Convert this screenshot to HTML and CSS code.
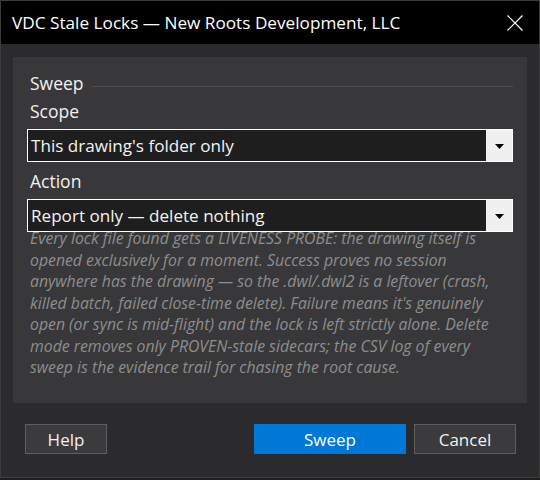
FILE: index.html
```html
<!DOCTYPE html>
<html>
<head>
<meta charset="utf-8">
<link rel="stylesheet" href="styles.css">
</head>
<body>
<div class="window">
  <div class="titlebar">
    <span class="title">VDC Stale Locks — New Roots Development, LLC</span>
    <svg class="close" width="16" height="16" viewBox="0 0 16 16"><path d="M0.5 0.5 L15.5 15.5 M15.5 0.5 L0.5 15.5" stroke="#ffffff" stroke-width="1.2" fill="none"/></svg>
  </div>
  <div class="body">
    <div class="panel">
      <div class="heading"><span>Sweep</span><div class="rule"></div></div>
      <div class="label">Scope</div>
      <div class="combo"><span class="value">This drawing's folder only</span><span class="drop"><svg width="9" height="5" viewBox="0 0 9 5"><path d="M0 0 H9 L4.5 5 Z" fill="#000"/></svg></span></div>
      <div class="label">Action</div>
      <div class="combo"><span class="value">Report only — delete nothing</span><span class="drop"><svg width="9" height="5" viewBox="0 0 9 5"><path d="M0 0 H9 L4.5 5 Z" fill="#000"/></svg></span></div>
      <p class="desc">Every lock file found gets a LIVENESS PROBE: the drawing itself is<br>opened exclusively for a moment. Success proves no session<br>anywhere has the drawing — so the .dwl/.dwl2 is a leftover (crash,<br>killed batch, failed close-time delete). Failure means it's genuinely<br>open (or sync is mid-flight) and the lock is left strictly alone. Delete<br>mode removes only PROVEN-stale sidecars; the CSV log of every<br>sweep is the evidence trail for chasing the root cause.</p>
    </div>
    <div class="footer">
      <button class="btn">Help</button>
      <div class="spacer"></div>
      <button class="btn primary">Sweep</button>
      <button class="btn cancel">Cancel</button>
    </div>
  </div>
</div>
</body>
</html>
```
FILE: styles.css
```css
html, body {
  margin: 0;
  padding: 0;
  background: #1f1f1f;
  width: 540px;
  height: 480px;
  overflow: hidden;
}
.window {
  box-sizing: border-box;
  width: 540px;
  height: 478px;
  border: 1px solid #3c3c3c;
  display: flex;
  flex-direction: column;
  font-family: "Open Sans", sans-serif;
  color: #f0f0f0;
}
.titlebar {
  height: 43px;
  background: #000;
  display: flex;
  align-items: center;
  padding-left: 11px;
  padding-right: 16px;
}
.title {
  flex: 1;
  font-size: 17.2px;
  color: #fff;
}
.close {
  display: block;
  margin-top: 1px;
}
.body {
  flex: 1;
  background: #2b2b2d;
  display: flex;
  flex-direction: column;
}
.panel {
  margin: 13px 12px 0 12px;
  height: 346px;
  box-sizing: border-box;
  background: #38383a;
  padding: 15px 14px 0 14px;
}
.heading {
  display: flex;
  align-items: center;
  font-size: 17.5px;
  line-height: 22px;
  padding-left: 3px;
}
.heading .rule {
  flex: 1;
  height: 1px;
  background: #4d4d4f;
  margin-left: 8px;
  margin-top: 6px;
}
.label {
  font-size: 17.5px;
  line-height: 22px;
  padding-left: 3px;
  margin: 8px 0 7px 0;
}
.heading + .label { margin-top: 6px; }
.combo {
  height: 33px;
  box-sizing: border-box;
  border: 1px solid #ffffff;
  background: #1e1e1e;
  display: flex;
  align-items: center;
}
.combo .value {
  flex: 1;
  padding-left: 3px;
  font-size: 17.1px;
  color: #f2f2f2;
}
.combo .drop {
  width: 26px;
  align-self: stretch;
  background: #f0f0f0;
  display: flex;
  align-items: center;
  justify-content: center;
}
.combo .drop svg { display: block; margin-top: 1px; }
.desc {
  margin: -4px 0 0 0;
  padding-left: 3px;
  font-style: italic;
  font-size: 15.8px;
  line-height: 21.5px;
  color: #8e8e8e;
  white-space: nowrap;
}
.footer {
  display: flex;
  padding: 21px 23px 0 24px;
  gap: 8px;
}
.spacer { flex: 1; }
.btn {
  height: 30px;
  box-sizing: border-box;
  font-family: "Open Sans", sans-serif;
  font-size: 17px;
  color: #f0f0f0;
  background: #3b3b3e;
  border: 1px solid #5e5e60;
  padding: 0;
  width: 82px;
}
.btn.primary {
  width: 152px;
  background: #0078d7;
  border-color: #0078d7;
  color: #fff;
}
.btn.cancel { width: 102px; }
```
